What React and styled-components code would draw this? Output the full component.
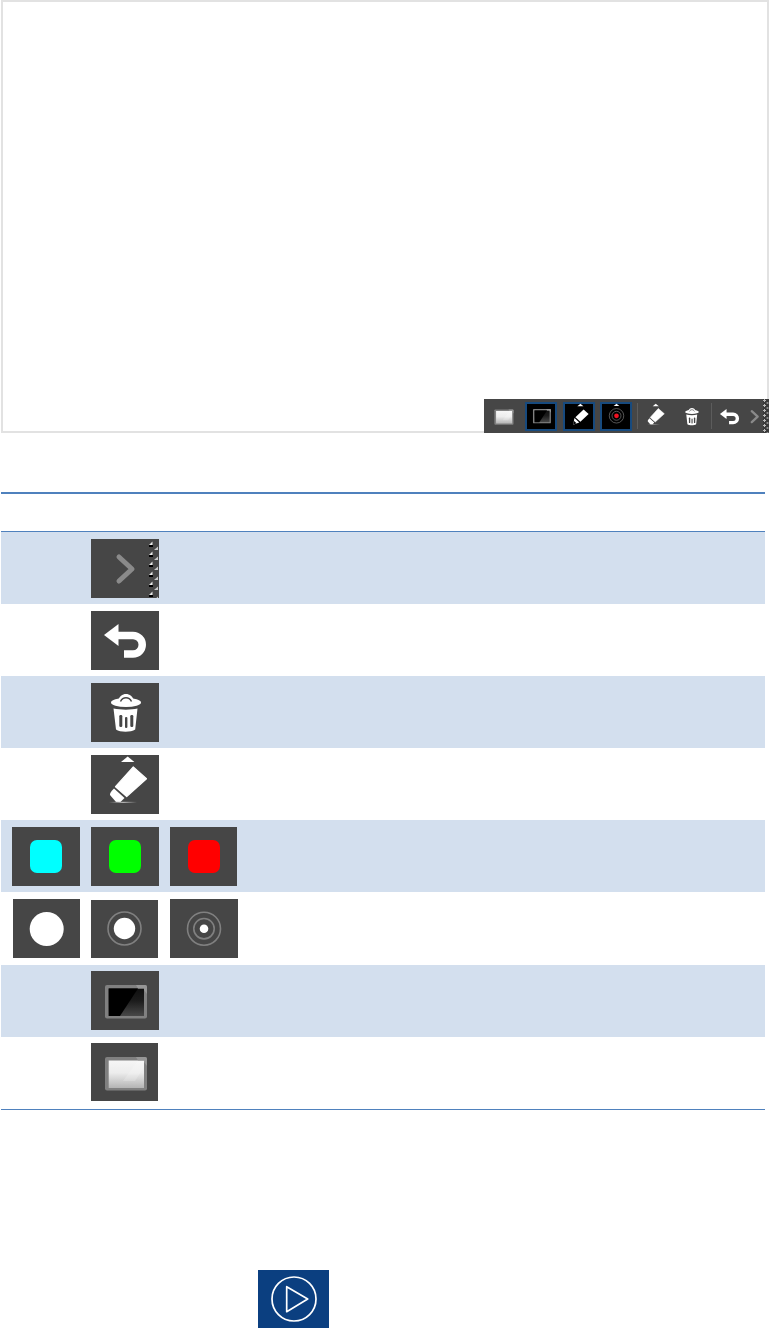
import React from 'react'
import styled, { createGlobalStyle } from 'styled-components'

const GlobalStyle = createGlobalStyle`
  html, body {
    margin: 0;
    padding: 0;
    background: #fff;
    font-family: "Liberation Sans", Arial, sans-serif;
  }
`

const Page = styled.div`
  width: 769px;
  height: 1328px;
  overflow: hidden;
`

const Canvas = styled.div`
  position: relative;
  box-sizing: border-box;
  width: 768px;
  height: 433px;
  margin-left: 1px;
  border: 2px solid #e2e2e2;
`

const Toolbar = styled.div`
  position: absolute;
  right: -2px;
  bottom: -2px;
  box-sizing: border-box;
  display: flex;
  align-items: center;
  width: 285px;
  height: 34px;
  padding-left: 3px;
  background: #464646;
`

const ToolSlot = styled.div`
  display: flex;
  flex: none;
  align-items: center;
  justify-content: center;
  box-sizing: border-box;
  width: ${(p) => p.$w || 32}px;
  height: 29px;
  margin-right: ${(p) => p.$gap || 0}px;
  background: ${(p) => (p.$active ? '#000' : 'transparent')};
  border: ${(p) => (p.$active ? '2px solid #174a7e' : 'none')};
`

const ToolDivider = styled.div`
  flex: none;
  width: 1px;
  height: 26px;
  background: #5c5c5c;
`

const Grip = styled.div`
  flex: none;
  align-self: stretch;
  width: 6px;
  background-color: #3a3a3a;
  background-image: radial-gradient(circle at 1.5px 1.5px, #b8b8b8 1px, transparent 1.2px),
    radial-gradient(circle at 4.5px 4px, #8c8c8c 1px, transparent 1.2px);
  background-size: 6px 5px;
`

const Table = styled.div`
  width: 764px;
  margin: 59px 0 0 1px;
  border-top: 2px solid #4f81bd;
  border-bottom: 1px solid #4f81bd;
`

const HeaderRow = styled.div`
  height: 37px;
  border-bottom: 1px solid #4f81bd;
`

const Row = styled.div`
  box-sizing: border-box;
  display: grid;
  grid-template-columns: repeat(3, 68px);
  column-gap: 11px;
  align-items: start;
  height: ${(p) => p.$h || 72}px;
  padding: ${(p) => p.$top || 7}px 0 0 11px;
  background: ${(p) => (p.$band ? '#d3dfee' : '#fff')};
`

const Tile = styled.div`
  display: flex;
  align-items: center;
  justify-content: center;
  grid-column: ${(p) => p.$col};
  justify-self: ${(p) => p.$side || 'start'};
  width: ${(p) => p.$w || 68}px;
  height: ${(p) => p.$h || 59}px;
  margin-top: ${(p) => p.$drop || 0}px;
  background: #464646;
`

const Swatch = styled.div`
  width: 32px;
  height: 33px;
  border-radius: 7px;
  background: ${(p) => p.$color};
`

const PlayButton = styled.div`
  display: flex;
  align-items: center;
  justify-content: center;
  width: 71px;
  height: 58px;
  margin: 160px 0 0 258px;
  background: #0b3f80;
`

const GlyphSvg = styled.svg`
  flex: none;
  display: block;
`

const Glyph = ({ size = 68, children }) => (
  <GlyphSvg width={size} height={size * 59 / 68} viewBox="0 0 68 59" fill="none">
    {children}
  </GlyphSvg>
)

const GripDots = () => (
  <>
    {[0, 1, 2, 3, 4, 5].map((i) => (
      <g key={i} transform={`translate(0 ${i * 10})`}>
        <rect x="58" y="6" width="4" height="2" fill="#000" />
        <path d="M58 6 L61.5 2.5 V6 Z" fill="#e8e8e8" />
        <path d="M63 11 L67 7.5 V11 Z" fill="#c8c8c8" />
      </g>
    ))}
  </>
)

const ChevronIcon = ({ size, grip }) => (
  <Glyph size={size}>
    <path d="M28 18 L41 30 L28 42" stroke="#8a8a8a" strokeWidth="5" strokeLinecap="round" strokeLinejoin="round" />
    {grip && <GripDots />}
  </Glyph>
)

const UndoIcon = ({ size }) => (
  <Glyph size={size}>
    <path d="M13 24 L27.5 13 V35 Z" fill="#fff" />
    <path d="M26 24.5 H42 A9.25 9.25 0 0 1 42 43 H33" stroke="#fff" strokeWidth="7.5" />
  </Glyph>
)

const TrashIcon = ({ size }) => (
  <Glyph size={size}>
    <path d="M27 18 C29 8.5 41 8.5 43 18 Z" fill="#fff" />
    <ellipse cx="35" cy="19.5" rx="15" ry="4.6" fill="#fff" />
    <path d="M29.5 18.5 C32 13.5 38 13.5 40.5 18.5" stroke="#464646" strokeWidth="1.5" />
    <path d="M22.5 25.5 C30 27 40 27 46.5 25.5 L44.2 46.5 C40 49.5 29 49.5 25 46.5 Z" fill="#fff" />
    <rect x="28.3" y="32" width="3" height="12" rx="1.2" fill="#464646" />
    <rect x="34" y="34" width="2.4" height="11" rx="1.1" fill="#464646" />
    <rect x="39.3" y="32" width="3" height="12" rx="1.2" fill="#464646" />
  </Glyph>
)

const Caret = ({ x }) => <path d={`M${x - 6.7} 7 L${x} 1.5 L${x + 6.7} 7 Z`} fill="#fff" />

const EraserIcon = ({ size, id }) => (
  <Glyph size={size}>
    <defs>
      <linearGradient id={id} x1="0" x2="1" y1="0" y2="0">
        <stop offset="0" stopColor="#464646" />
        <stop offset="0.5" stopColor="#c0c0c0" />
        <stop offset="1" stopColor="#464646" />
      </linearGradient>
    </defs>
    <Caret x={36.7} />
    <path d="M42.3 12 L55.5 23.7 L35.7 41.5 L24.5 31.7 Z" fill="#fff" stroke="#fff" strokeWidth="1.2" strokeLinejoin="round" />
    <path d="M23 33.5 L33.5 43 L29.5 47 H25 L19 40 Q18.5 37.5 23 33.5 Z" fill="#fff" />
    <rect x="18" y="46.8" width="28" height="1.1" fill={`url(#${id})`} />
  </Glyph>
)

const PencilIcon = ({ size }) => (
  <Glyph size={size}>
    <Caret x={36} />
    <path d="M43 14 L54 24 L36 41 L25 31 Z" fill="#fff" />
    <path d="M23 33 L33.5 43 L20 47.5 Z" fill="#fff" />
    <path d="M21.5 39 L27.5 44.5 L20 47.5 Z" fill="#000" />
  </Glyph>
)

const TargetIcon = ({ size }) => (
  <Glyph size={size}>
    <Caret x={34} />
    <circle cx="34" cy="30" r="17" stroke="#7a7a7a" strokeWidth="1.6" />
    <circle cx="34" cy="30" r="10.5" stroke="#7a7a7a" strokeWidth="1.6" />
    <circle cx="34" cy="30" r="5.5" fill="#f01020" />
  </Glyph>
)

const DotIcon = () => (
  <Glyph>
    <circle cx="33.7" cy="30" r="17" fill="#fff" />
  </Glyph>
)

const RingDotIcon = () => (
  <Glyph>
    <circle cx="33.5" cy="28.5" r="16.5" stroke="#808080" strokeWidth="1.6" />
    <circle cx="33.5" cy="28.5" r="10.7" fill="#fff" />
  </Glyph>
)

const DoubleRingIcon = () => (
  <Glyph>
    <circle cx="34" cy="29.7" r="16.5" stroke="#808080" strokeWidth="1.6" />
    <circle cx="34" cy="29.7" r="10.2" stroke="#808080" strokeWidth="1.6" />
    <circle cx="34" cy="29.7" r="4.3" fill="#fff" />
  </Glyph>
)

const ScreenIcon = ({ size, dark, id }) => (
  <Glyph size={size}>
    <defs>
      <linearGradient id={id} x1="0" x2="0" y1="0" y2="1">
        <stop offset="0" stopColor={dark ? '#101010' : '#f6f6f6'} />
        <stop offset="0.45" stopColor={dark ? '#1c1c1c' : '#ececec'} />
        <stop offset="1" stopColor={dark ? '#484848' : '#b4b4b4'} />
      </linearGradient>
    </defs>
    <rect x="14" y="14" width="42" height="33.5" rx="2" fill="#808080" />
    <rect x="17.7" y="17.5" width="35.3" height="27.5" fill={`url(#${id})`} />
    {dark
      ? <path d="M17.7 17.5 H47 L29 45 H17.7 Z" fill="#000" />
      : <path d="M47 17.5 H53 V24 L44 38 L32 38 Z" fill="#fff" opacity="0.2" />}
    <path d="M45 14 H54 Q56 14 56 16 V23 L53 19 V17.5 H47 Z" fill="#969696" />
  </Glyph>
)

const PlayIcon = () => (
  <GlyphSvg width="71" height="58" viewBox="0 0 71 58" fill="none">
    <circle cx="36" cy="29" r="22" stroke="#fff" strokeWidth="1.7" />
    <path d="M28.7 16.7 L49.7 29 L28.7 41.7 Z" stroke="#fff" strokeWidth="1.7" strokeLinejoin="round" />
  </GlyphSvg>
)

const TOOL_SIZE = 31

export default function App() {
  return (
    <Page>
      <GlobalStyle />
      <Canvas>
        <Toolbar>
          <ToolSlot $gap={6}><ScreenIcon size={TOOL_SIZE} id="toolLight" /></ToolSlot>
          <ToolSlot $active $gap={6}><ScreenIcon size={29} dark id="toolDark" /></ToolSlot>
          <ToolSlot $active $gap={5}><PencilIcon size={TOOL_SIZE} /></ToolSlot>
          <ToolSlot $active $gap={5}><TargetIcon size={29} /></ToolSlot>
          <ToolDivider />
          <ToolSlot $w={33}><EraserIcon size={TOOL_SIZE} id="toolEraserBase" /></ToolSlot>
          <ToolSlot $w={40}><TrashIcon size={TOOL_SIZE} /></ToolSlot>
          <ToolDivider />
          <ToolSlot $w={34}><UndoIcon size={TOOL_SIZE} /></ToolSlot>
          <ToolSlot $w={17}><ChevronIcon size={TOOL_SIZE} /></ToolSlot>
          <Grip />
        </Toolbar>
      </Canvas>

      <Table>
        <HeaderRow />
        <Row $band>
          <Tile $col={2}><ChevronIcon grip /></Tile>
        </Row>
        <Row>
          <Tile $col={2}><UndoIcon /></Tile>
        </Row>
        <Row $band>
          <Tile $col={2}><TrashIcon /></Tile>
        </Row>
        <Row>
          <Tile $col={2}><EraserIcon id="tableEraserBase" /></Tile>
        </Row>
        <Row $band>
          <Tile $col={1}><Swatch $color="#00ffff" /></Tile>
          <Tile $col={2}><Swatch $color="#00ff00" /></Tile>
          <Tile $col={3} $w={67}><Swatch $color="#ff0000" /></Tile>
        </Row>
        <Row $h={73}>
          <Tile $col={1} $w={67} $side="end"><DotIcon /></Tile>
          <Tile $col={2} $w={67} $h={58} $drop={1}><RingDotIcon /></Tile>
          <Tile $col={3} $w={68}><DoubleRingIcon /></Tile>
        </Row>
        <Row $band $top={6}>
          <Tile $col={2}><ScreenIcon dark id="tableDark" /></Tile>
        </Row>
        <Row $top={6}>
          <Tile $col={2} $w={67} $h={58}><ScreenIcon id="tableLight" /></Tile>
        </Row>
      </Table>

      <PlayButton><PlayIcon /></PlayButton>
    </Page>
  )
}
